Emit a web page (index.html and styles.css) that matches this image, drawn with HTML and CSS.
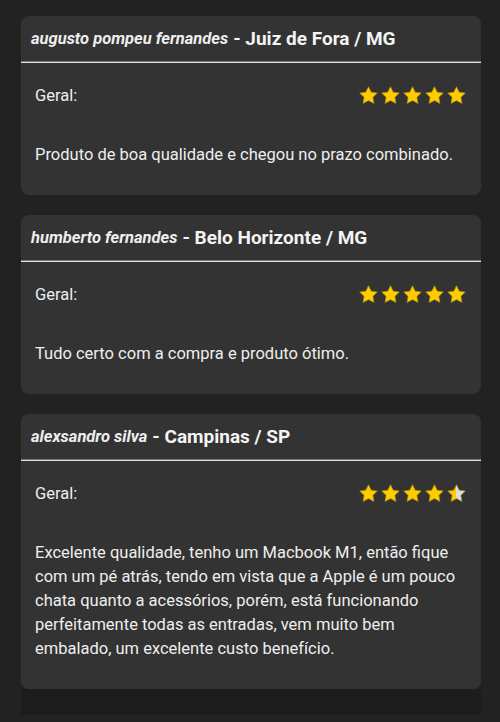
FILE: index.html
```html
<!DOCTYPE html>
<html lang="pt-BR">
<head>
    <meta charset="UTF-8">
    <meta name="viewport" content="width=device-width, initial-scale=1.0">
    <title>Avaliações</title>
    <link rel="stylesheet" href="styles.css">
</head>
<body>
    <svg class="defs" width="0" height="0">
        <defs>
            <symbol id="star" viewBox="0 0 24 24">
                <path d="M12 2l3.09 6.26L22 9.27l-5 4.87 1.18 6.88L12 17.77l-6.18 3.25L7 14.14 2 9.27l6.91-1.01z"/>
            </symbol>
            <linearGradient id="half">
                <stop offset="50%" stop-color="#ffcc00"/>
                <stop offset="50%" stop-color="#dcdcdc"/>
            </linearGradient>
        </defs>
    </svg>

    <div class="reviews">
        <div class="review">
            <div class="review-head">
                <span class="author">augusto pompeu fernandes</span>
                <span class="city">- Juiz de Fora / MG</span>
            </div>
            <hr>
            <div class="review-body">
                <div class="rating">
                    <span>Geral:</span>
                    <div class="stars">
                        <svg class="star"><use href="#star"/></svg>
                        <svg class="star"><use href="#star"/></svg>
                        <svg class="star"><use href="#star"/></svg>
                        <svg class="star"><use href="#star"/></svg>
                        <svg class="star"><use href="#star"/></svg>
                    </div>
                </div>
                <p>Produto de boa qualidade e chegou no prazo combinado.</p>
            </div>
        </div>

        <div class="review">
            <div class="review-head">
                <span class="author">humberto fernandes</span>
                <span class="city">- Belo Horizonte / MG</span>
            </div>
            <hr>
            <div class="review-body">
                <div class="rating">
                    <span>Geral:</span>
                    <div class="stars">
                        <svg class="star"><use href="#star"/></svg>
                        <svg class="star"><use href="#star"/></svg>
                        <svg class="star"><use href="#star"/></svg>
                        <svg class="star"><use href="#star"/></svg>
                        <svg class="star"><use href="#star"/></svg>
                    </div>
                </div>
                <p>Tudo certo com a compra e produto ótimo.</p>
            </div>
        </div>

        <div class="review">
            <div class="review-head">
                <span class="author">alexsandro silva</span>
                <span class="city">- Campinas / SP</span>
            </div>
            <hr>
            <div class="review-body">
                <div class="rating">
                    <span>Geral:</span>
                    <div class="stars">
                        <svg class="star"><use href="#star"/></svg>
                        <svg class="star"><use href="#star"/></svg>
                        <svg class="star"><use href="#star"/></svg>
                        <svg class="star"><use href="#star"/></svg>
                        <svg class="star half"><use href="#star"/></svg>
                    </div>
                </div>
                <p>Excelente qualidade, tenho um Macbook M1, então fique com um pé atrás, tendo em vista que a Apple é um pouco chata quanto a acessórios, porém, está funcionando perfeitamente todas as entradas, vem muito bem embalado, um excelente custo benefício.</p>
            </div>
        </div>

        <div class="more"></div>
    </div>
</body>
</html>
```

FILE: styles.css
```css
body {
    margin: 0;
    background: #222;
    color: #eee;
    font-family: Roboto, "Noto Sans", sans-serif;
}
.defs {
    position: absolute;
}
.reviews {
    display: flex;
    flex-direction: column;
    gap: 20px;
    padding: 16px 19px 0 21px;
}
.review {
    background: #333;
    border-radius: 8px;
}
.review-head {
    height: 45px;
    display: flex;
    align-items: center;
    gap: 5px;
    padding: 0 10px;
    box-sizing: border-box;
    white-space: nowrap;
}
.author {
    font-size: 16.5px;
    font-weight: bold;
    font-style: italic;
    color: #eee;
}
.city {
    font-size: 19px;
    font-weight: bold;
    color: #f4f4f4;
}
hr {
    margin: 0;
    border: none;
    border-top: 1px solid #777;
    border-bottom: 1px solid #e2e2e2;
}
.review-body {
    padding: 20px 14px 28px;
}
.rating {
    display: flex;
    justify-content: space-between;
    align-items: center;
    height: 24px;
    font-size: 16.5px;
}
.stars {
    display: flex;
    gap: 1px;
}
.star {
    width: 21px;
    height: 21px;
    fill: #ffcc00;
    stroke: #b8920c;
    stroke-width: 0.8;
}
.star.half {
    fill: url(#half);
}
.review-body p {
    margin: 36px 0 0;
    font-size: 16.5px;
    line-height: 24px;
}
.more {
    height: 26px;
    background: #1c1c1c;
    margin-top: -20px;
}
```
